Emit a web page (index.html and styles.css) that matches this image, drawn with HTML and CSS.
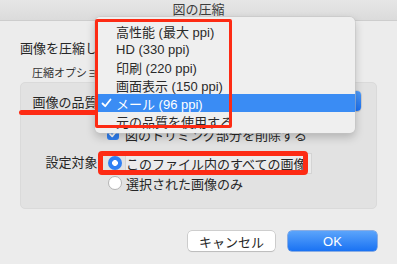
FILE: index.html
```html
<!DOCTYPE html>
<html lang="ja">
<head>
  <meta charset="UTF-8" />
  <meta name="viewport" content="width=device-width, initial-scale=1.0" />
  <title>図の圧縮</title>
  <link rel="stylesheet" href="styles.css">
</head>
<body>

  <div class="window">
    <div class="titlebar">図の圧縮</div>

    <div class="content">
      <p class="prompt">画像を圧縮して</p>
      <p class="group-title">圧縮オプション:</p>

      <div class="group">
        <div class="row">
          <span class="label">画像の品質:</span>
          <div class="popup">
            <span class="stepper"></span>
          </div>
        </div>

        <div class="row check-row">
          <span class="label"></span>
          <span class="checkbox">
            <svg width="10" height="10" viewBox="0 0 10 10"><polyline points="2,5.2 4.2,7.4 8,2.6" fill="none" stroke="#fff" stroke-width="1.8" stroke-linecap="round" stroke-linejoin="round"/></svg>
          </span>
          <span class="option-text">図のトリミング部分を削除する</span>
        </div>

        <div class="row radio-block">
          <span class="label">設定対象:</span>
          <div class="radio-list">
            <div class="radio-item">
              <span class="radio on"></span>
              <span class="option-text focused">このファイル内のすべての画像</span>
            </div>
            <div class="radio-item">
              <span class="radio"></span>
              <span class="option-text">選択された画像のみ</span>
            </div>
          </div>
        </div>
      </div>

      <div class="actions">
        <button class="btn">キャンセル</button>
        <button class="btn btn-ok">OK</button>
      </div>
    </div>

    <!-- Open popup menu -->
    <div class="menu">
      <div class="menu-item"><span class="tick"></span>高性能 (最大 ppi)</div>
      <div class="menu-item"><span class="tick"></span>HD (330 ppi)</div>
      <div class="menu-item"><span class="tick"></span>印刷 (220 ppi)</div>
      <div class="menu-item"><span class="tick"></span>画面表示 (150 ppi)</div>
      <div class="menu-item selected">
        <span class="tick">
          <svg width="11" height="10" viewBox="0 0 11 10"><polyline points="1.5,5.5 4.2,8.2 9.5,1.5" fill="none" stroke="#fff" stroke-width="1.8" stroke-linecap="round" stroke-linejoin="round"/></svg>
        </span>メール (96 ppi)
      </div>
      <div class="menu-item"><span class="tick"></span>元の品質を使用する</div>
    </div>

    <!-- Annotations -->
    <div class="mark-line"></div>
    <div class="mark-box menu-mark"></div>
    <div class="mark-box radio-mark"></div>
  </div>

</body>
</html>
```

FILE: styles.css
```css
* {
  margin: 0;
  padding: 0;
  box-sizing: border-box;
  font-family: 'Liberation Sans', 'Noto Sans CJK JP', sans-serif;
}
body {
  width: 397px;
  height: 264px;
  overflow: hidden;
  background: #ececec;
  color: #262626;
}
.window {
  position: relative;
  height: 264px;
}
.titlebar {
  height: 21px;
  line-height: 20px;
  text-align: center;
  font-size: 13px;
  color: #3c3c3c;
  background: linear-gradient(#e6e6e6, #dbdbdb);
  border-bottom: 1px solid #cdcdcd;
}
.content {
  padding: 20px 20px 0 20px;
}
.prompt {
  font-size: 13px;
  line-height: 16px;
  white-space: nowrap;
}
.group-title {
  font-size: 11px;
  line-height: 14px;
  margin: 9px 0 2px 12px;
  color: #333;
}
/* Options box */
.group {
  height: 127px;
  background: #e2e2e2;
  border: 1px solid #dadada;
  border-radius: 5px;
  padding: 8px 15px 0 0;
}
.row {
  display: flex;
  align-items: center;
  font-size: 13px;
  height: 20px;
}
.label {
  width: 80px;
  margin-right: 7px;
  flex-shrink: 0;
  text-align: right;
  white-space: nowrap;
}
.popup {
  flex: 1;
  height: 20px;
  display: flex;
  justify-content: flex-end;
  background: #fff;
  border-radius: 4px;
  box-shadow: 0 0 0 0.5px #b8b8b8, 0 1px 1px rgba(0, 0, 0, 0.15);
  margin-left: 4px;
}
.stepper {
  width: 16px;
  height: 20px;
  background: linear-gradient(#4f9bf8, #1b6ff0);
  border-radius: 0 4px 4px 0;
}
.check-row {
  margin-top: 15px;
  height: 16px;
}
.checkbox {
  width: 12px;
  height: 12px;
  border-radius: 3px;
  background: #2f80f3;
  display: flex;
  align-items: center;
  justify-content: center;
  margin: 0 6px 0 -1px;
}
.option-text {
  white-space: nowrap;
}
.option-text.focused {
  background: #ebebeb;
  box-shadow: 0 0 0 1px #d4d4d4;
  padding-right: 4px;
}
.radio-block {
  margin-top: 13px;
  height: auto;
  align-items: flex-start;
}
.radio-block .label {
  line-height: 16px;
}
.radio-list {
  display: flex;
  flex-direction: column;
  gap: 4px;
}
.radio-item {
  display: flex;
  align-items: center;
  height: 16px;
}
.radio {
  width: 14px;
  height: 14px;
  border-radius: 50%;
  background: #fff;
  border: 1px solid #b4b4b4;
  margin-right: 4px;
}
.radio.on {
  border: none;
  background: radial-gradient(circle, #fff 0 2.6px, #2f80f3 3.2px);
}
/* Buttons */
.actions {
  display: flex;
  justify-content: flex-end;
  gap: 13px;
  margin-top: 22px;
}
.btn {
  width: 87px;
  height: 20px;
  font-size: 13px;
  border-radius: 4px;
  border: none;
  background: #fff;
  color: #262626;
  box-shadow: 0 0 0 0.5px #b0b0b0, 0 1px 1px rgba(0, 0, 0, 0.15);
}
.btn-ok {
  width: 89px;
  color: #fff;
  background: linear-gradient(#5ba4fb, #1a72f3);
  box-shadow: 0 0 0 0.5px #2a6fd8;
}
/* Popup menu over the dialog */
.menu {
  position: absolute;
  left: 95px;
  top: 17px;
  width: 260px;
  height: 116px;
  padding-top: 5px;
  background: #efefef;
  border-radius: 5px;
  box-shadow: 0 0 0 0.5px #c4c4c4, 0 4px 10px rgba(0, 0, 0, 0.22);
}
.menu-item {
  display: flex;
  align-items: center;
  height: 18px;
  font-size: 13px;
  color: #2a2a2a;
  white-space: nowrap;
}
.tick {
  width: 15px;
  margin-left: 6px;
  display: flex;
  align-items: center;
}
.menu-item.selected {
  background: #3a8cf4;
  color: #fff;
}
/* Red annotations */
.mark-line {
  position: absolute;
  left: 19px;
  top: 110px;
  width: 79px;
  height: 5px;
  border-radius: 3px;
  background: #fd2b14;
}
.mark-box {
  position: absolute;
  border: 3px solid #fd2b14;
}
.menu-mark {
  left: 95px;
  top: 19px;
  width: 137px;
  height: 109px;
  border-radius: 2px;
}
.radio-mark {
  left: 98px;
  top: 151px;
  width: 210px;
  height: 24px;
  border-width: 5px;
  border-radius: 4px;
}
```
